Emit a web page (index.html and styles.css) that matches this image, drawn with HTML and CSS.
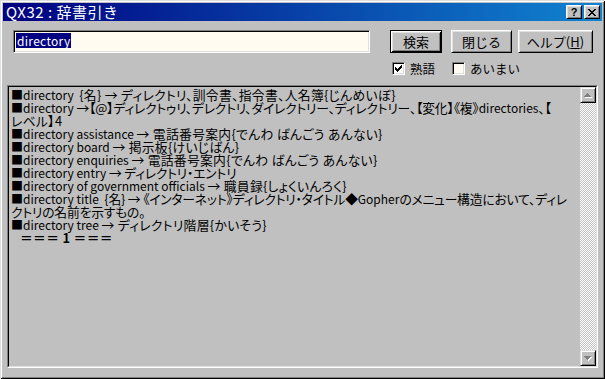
FILE: index.html
```html
<!DOCTYPE html>
<html lang="ja">
<head>
<meta charset="utf-8">
<title>QX32 : 辞書引き</title>
<link rel="stylesheet" href="styles.css">
</head>
<body>
<div class="window">
  <div class="titlebar">
    <span class="title">QX32 : 辞書引き</span>
    <div class="caption-btns">
      <div class="cap cap-help">?</div>
      <div class="cap cap-close">
        <svg width="8" height="7" viewBox="0 0 8 7"><path d="M0 0h2v1h1v1h2V1h1V0h2v1H7v1H6v1H5v1h1v1h1v1h1v1H6V6H5V5H3v1H2v1H0V6h1V5h1V4h1V3H2V2H1V1H0z" fill="#000"/></svg>
      </div>
    </div>
  </div>
  <div class="content">
    <div class="search-row">
      <div class="textbox"><span class="sel">directory</span></div>
      <div class="btn btn-default btn-search">検索</div>
      <div class="btn btn-close">閉じる</div>
      <div class="btn btn-help">ヘルプ(<u>H</u>)</div>
    </div>
    <div class="options">
      <div class="check-item">
        <div class="checkbox checked">
          <svg width="7" height="7" viewBox="0 0 7 7"><path d="M6 0h1v3H6v1H5v1H4v1H3v1H2V6H1V5H0V2h1v1h1v1h1V3h1V2h1V1h1z" fill="#000"/></svg>
        </div>
        <span class="check-label">熟語</span>
      </div>
      <div class="check-item">
        <div class="checkbox"></div>
        <span class="check-label">あいまい</span>
      </div>
    </div>
    <div class="listbox">
      <div class="listbox-inner">
        <div class="lines">
          <div class="line">■directory&nbsp; <span class="ja">{名} → ディレクトリ、訓令書、指令書、人名簿{じんめいぼ}</span></div>
          <div class="line tight">■directory <span class="ja">→【@】ディレクトゥリ、デレクトリ、ダイレクトリー、ディレクトリー、【変化】《複》</span>directories<span class="ja">、【</span></div>
          <div class="line"><span class="ja">レベル】4</span></div>
          <div class="line">■directory assistance <span class="ja">→ 電話番号案内{でんわ ばんごう あんない}</span></div>
          <div class="line">■directory board <span class="ja">→ 掲示板{けいじばん}</span></div>
          <div class="line">■directory enquiries <span class="ja">→ 電話番号案内{でんわ ばんごう あんない}</span></div>
          <div class="line tight">■directory entry <span class="ja">→ ディレクトリ・エントリ</span></div>
          <div class="line">■directory of government officials <span class="ja">→ 職員録{しょくいんろく}</span></div>
          <div class="line tight">■directory title&nbsp; <span class="ja">{名} → 《インターネット》ディレクトリ・タイトル◆</span>Gopher<span class="ja">のメニュー構造において、ディレ</span></div>
          <div class="line tight"><span class="ja">クトリの名前を示すもの。</span></div>
          <div class="line">■directory tree <span class="ja">→ ディレクトリ階層{かいそう}</span></div>
          <div class="line sep"><span class="ja">＝＝＝ 1 ＝＝＝</span></div>
        </div>
        <div class="vscroll">
          <div class="sbtn">
            <svg width="8" height="5" viewBox="0 0 8 5"><path d="M4 1h1v1h1v1h1v1h1v1H1V4h1V3h1V2h1z" fill="#fff"/><path d="M3 0h1v1h1v1h1v1h1v1H0V3h1V2h1V1h1z" fill="#808080"/></svg>
          </div>
          <div class="track"></div>
          <div class="sbtn">
            <svg width="8" height="5" viewBox="0 0 8 5"><path d="M1 1h7v1H7v1H6v1H5v1H4V4H3V3H2V2H1z" fill="#fff"/><path d="M0 0h7v1H6v1H5v1H4v1H3V3H2V2H1V1H0z" fill="#808080"/></svg>
          </div>
        </div>
      </div>
    </div>
  </div>
</div>
</body>
</html>
```

FILE: styles.css
```css
* { box-sizing: border-box; }
html, body { margin: 0; padding: 0; }
body {
  background: #c0c0c0;
  font-family: "Noto Sans CJK JP", "Noto Sans", sans-serif;
  color: #000;
  width: 605px;
  height: 379px;
  overflow: hidden;
}
.window {
  width: 605px;
  height: 379px;
  padding: 3px;
  background: #c0c0c0;
  box-shadow: inset 1px 1px #dfdfdf, inset -1px -1px #000, inset 2px 2px #fff, inset -2px -2px #808080;
  display: flex;
  flex-direction: column;
}
.titlebar {
  height: 18px;
  background: linear-gradient(to right, #000080, #1084d0);
  display: flex;
  align-items: center;
  justify-content: space-between;
  padding: 0 2px 0 3px;
}
.title {
  color: #fff;
  font-size: 15px;
  line-height: 18px;
  letter-spacing: 0.5px;
}
.caption-btns {
  display: flex;
  gap: 2px;
}
.cap {
  width: 16px;
  height: 14px;
  background: #c0c0c0;
  border: 1px solid;
  border-color: #fff #000 #000 #fff;
  box-shadow: inset 1px 1px #dfdfdf, inset -1px -1px #808080;
  display: flex;
  align-items: center;
  justify-content: center;
}
.cap-help {
  font-family: "Liberation Sans", sans-serif;
  font-weight: bold;
  font-size: 11px;
  line-height: 12px;
}
.content {
  flex: 1;
  display: flex;
  flex-direction: column;
  padding: 0 4px 0 4px;
}
.search-row {
  display: flex;
  margin-top: 9px;
  padding-left: 6px;
  height: 23px;
}
.textbox {
  width: 357px;
  height: 23px;
  background: #fffbf0;
  border: 1px solid;
  border-color: #808080 #fff #fff #808080;
  box-shadow: inset 1px 1px #000, inset -1px -1px #dfdfdf;
  padding: 2px 0 0 2px;
  font-size: 12px;
  line-height: 15px;
}
.sel {
  display: inline-block;
  background: #000080;
  color: #fff;
  height: 15px;
  padding: 0 1px;
  letter-spacing: 0.3px;
}
.btn {
  height: 23px;
  background: #c0c0c0;
  border: 1px solid;
  border-color: #fff #000 #000 #fff;
  box-shadow: inset 1px 1px #dfdfdf, inset -1px -1px #808080;
  font-size: 13px;
  display: flex;
  align-items: center;
  justify-content: center;
  line-height: 14px;
}
.btn-default {
  border-color: #000;
  box-shadow: inset 1px 1px #fff, inset -1px -1px #000, inset 2px 2px #dfdfdf, inset -2px -2px #808080;
}
.btn-search { width: 52px; margin-left: 20px; }
.btn-close { width: 61px; margin-left: 9px; }
.btn-help { width: 75px; margin-left: 6px; }
.btn u { text-decoration: underline; text-underline-offset: 1px; }
.options {
  display: flex;
  align-items: center;
  margin-top: 9px;
  margin-left: 385px;
  height: 13px;
  gap: 17px;
}
.check-item {
  display: flex;
  align-items: center;
  gap: 5px;
}
.checkbox {
  width: 13px;
  height: 13px;
  background: #fffbf0;
  border: 1px solid;
  border-color: #808080 #fff #fff #808080;
  box-shadow: inset 1px 1px #000, inset -1px -1px #dfdfdf;
  display: flex;
  align-items: center;
  justify-content: center;
}
.checkbox.checked { background: #fff; }
.check-label {
  font-size: 12.5px;
  line-height: 13px;
}
.listbox {
  margin-top: 10px;
  height: 283px;
  border: 1px solid;
  border-color: #808080 #fff #fff #808080;
}
.listbox-inner {
  height: 100%;
  border: 1px solid;
  border-color: #000 #dfdfdf #dfdfdf #000;
  display: flex;
  background: #c0c0c0;
}
.lines {
  flex: 1;
  padding: 1px 0 0 2px;
  font-size: 12px;
  line-height: 13px;
  font-feature-settings: "palt";
  overflow: hidden;
}
.line { white-space: nowrap; height: 13px; }
.ja { font-size: 12.8px; letter-spacing: 0.3px; }
.tight .ja { letter-spacing: -0.2px; }
.sep { padding-left: 9px; font-weight: bold; }
.vscroll {
  width: 16px;
  display: flex;
  flex-direction: column;
}
.sbtn {
  width: 16px;
  height: 16px;
  background: #c0c0c0;
  border: 1px solid;
  border-color: #dfdfdf #000 #000 #dfdfdf;
  box-shadow: inset 1px 1px #fff, inset -1px -1px #808080;
  display: flex;
  align-items: center;
  justify-content: center;
}
.track {
  flex: 1;
  background-color: #c0c0c0;
  background-image: repeating-conic-gradient(#fff 0 25%, #c0c0c0 0 50%);
  background-size: 2px 2px;
}
```
